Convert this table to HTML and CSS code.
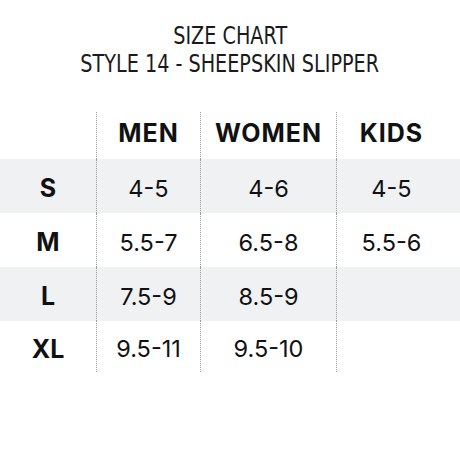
FILE: index.html
```html
<!DOCTYPE html>
<html>
<head>
<meta charset="utf-8">
<link rel="stylesheet" href="styles.css">
</head>
<body>
<div class="page">
  <div class="title">
    <div class="line"><span class="narrow">SIZE CHART</span></div>
    <div class="line"><span class="narrow">STYLE 14 - SHEEPSKIN SLIPPER</span></div>
  </div>
  <div class="chart">
    <div class="row head">
      <div class="cell label"></div>
      <div class="cell col">MEN</div>
      <div class="cell col">WOMEN</div>
      <div class="cell col">KIDS</div>
    </div>
    <div class="row shade">
      <div class="cell label">S</div>
      <div class="cell col">4-5</div>
      <div class="cell col">4-6</div>
      <div class="cell col">4-5</div>
    </div>
    <div class="row">
      <div class="cell label">M</div>
      <div class="cell col">5.5-7</div>
      <div class="cell col">6.5-8</div>
      <div class="cell col">5.5-6</div>
    </div>
    <div class="row shade">
      <div class="cell label">L</div>
      <div class="cell col">7.5-9</div>
      <div class="cell col">8.5-9</div>
      <div class="cell col"></div>
    </div>
    <div class="row last">
      <div class="cell label">XL</div>
      <div class="cell col">9.5-11</div>
      <div class="cell col">9.5-10</div>
      <div class="cell col"></div>
    </div>
  </div>
</div>
</body>
</html>
```
FILE: styles.css
```css
html, body {
  margin: 0;
  padding: 0;
  background: #ffffff;
}
.page {
  width: 460px;
  height: 460px;
  color: #111111;
}
.title {
  padding-top: 22px;
  text-align: center;
  font-family: "DejaVu Sans", sans-serif;
  font-weight: 400;
  font-size: 24px;
  line-height: 28px;
  color: #1a1a1a;
}
.narrow {
  display: inline-block;
  transform: scaleX(0.8);
  white-space: nowrap;
}
.chart {
  margin-top: 34px;
}
.row {
  display: grid;
  grid-template-columns: 96px 104px 136px 110px 14px;
  height: 54px;
  align-items: stretch;
}
.row.head {
  height: 47px;
}
.row.last {
  height: 51px;
}
.shade {
  background: #f0f1f3;
}
.cell {
  display: flex;
  align-items: center;
  justify-content: center;
  font-family: "Inter", "Liberation Sans", sans-serif;
}
.col {
  border-left: 1px dotted #9a9a9a;
  font-size: 23.5px;
  font-weight: 400;
  padding-top: 4px;
}
.label {
  font-size: 25px;
  font-weight: 700;
  padding-top: 4px;
}
.head .col {
  font-size: 25px;
  font-weight: 700;
  letter-spacing: 1px;
  padding-top: 0;
  padding-bottom: 6px;
}
```
